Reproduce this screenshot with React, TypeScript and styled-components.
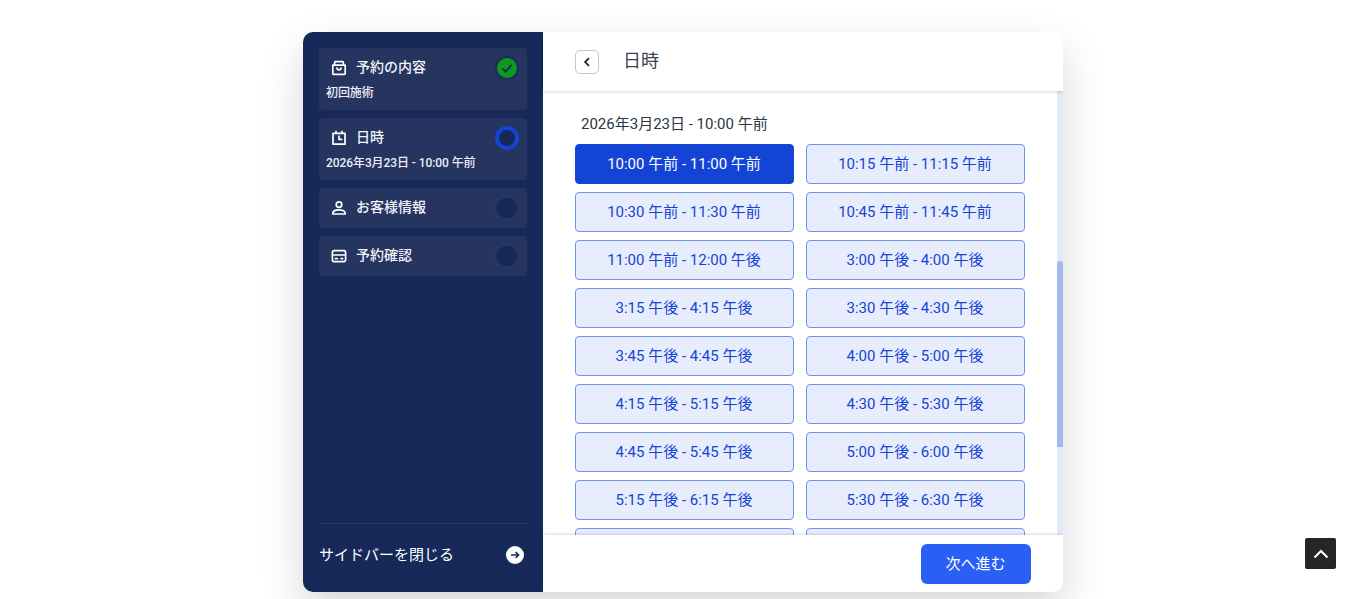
import React from "react";
import styled, { createGlobalStyle } from "styled-components";

const GlobalStyle = createGlobalStyle`
  html, body {
    margin: 0;
    height: 100%;
    background: #fff;
    overflow: hidden;
    font-family: Roboto, "Noto Sans CJK JP", sans-serif;
  }
`;

const Page = styled.div`
  display: flex;
  justify-content: center;
  padding-top: 32px;
`;

const Card = styled.div`
  display: flex;
  width: 760px;
  height: 560px;
  border-radius: 10px;
  background: #fff;
  box-shadow: 0 18px 44px rgba(0, 0, 0, 0.16);
  overflow: hidden;
`;

const Sidebar = styled.aside`
  display: flex;
  flex-direction: column;
  flex: 0 0 240px;
  box-sizing: border-box;
  padding: 16px;
  background: #172959;
`;

const Steps = styled.div`
  display: flex;
  flex-direction: column;
  gap: 8px;
  flex: 1;
`;

const Step = styled.div`
  display: flex;
  flex-direction: column;
  box-sizing: border-box;
  height: ${(p) => (p.$tall ? 62 : 40)}px;
  padding: 8px 8px 0 7px;
  border-radius: 4px;
  background: #263460;
`;

const StepRow = styled.div`
  display: flex;
  align-items: center;
  height: 24px;
`;

const StepIcon = styled.span`
  display: flex;
  width: 16px;
  height: 16px;
  margin: 0 9px 0 5px;
  color: #fff;
`;

const StepTitle = styled.span`
  flex: 1;
  padding-bottom: 5px;
  font-size: 14px;
  font-weight: 500;
  color: #f1f3f8;
`;

const StepSub = styled.div`
  margin-top: 5px;
  font-size: 12px;
  line-height: 16px;
  font-weight: 500;
  letter-spacing: -0.08px;
  color: #eceef4;
`;

const Status = styled.span`
  display: flex;
  align-items: center;
  justify-content: center;
  box-sizing: border-box;
  width: 24px;
  height: 24px;
  border-radius: 50%;
  background: ${(p) => (p.$state === "done" ? "#0c9a1e" : "#172959")};
  border: ${(p) =>
    p.$state === "active"
      ? "4px solid #1444d6"
      : p.$state === "done"
        ? "2px solid #1c2c5e"
        : "1px solid #33416f"};
  color: #172959;
`;

const SidebarFooter = styled.div`
  display: flex;
  align-items: center;
  justify-content: space-between;
  height: 53px;
  margin-bottom: -1px;
  border-top: 1px solid #2a3963;
`;

const CloseLabel = styled.span`
  padding-top: 6px;
  font-size: 15px;
  color: #fff;
`;

const CloseIcon = styled.span`
  display: flex;
  align-items: center;
  justify-content: center;
  width: 18px;
  height: 18px;
  margin: 9px 3px 0 0;
  border-radius: 50%;
  background: #fff;
  color: #172959;
`;

const Main = styled.main`
  display: flex;
  flex-direction: column;
  flex: 1;
  min-width: 0;
`;

const Header = styled.header`
  display: flex;
  align-items: center;
  flex: 0 0 59px;
  padding-left: 32px;
  position: relative;
  z-index: 1;
  box-shadow: 0 1px 3px rgba(0, 0, 0, 0.16);
`;

const BackButton = styled.button`
  display: flex;
  align-items: center;
  justify-content: center;
  box-sizing: border-box;
  width: 24px;
  height: 24px;
  padding: 0;
  margin-right: 24px;
  border: 1px solid #c4c7cc;
  border-radius: 5px;
  background: #fff;
  color: #1f2a3a;
`;

const HeaderTitle = styled.h1`
  margin: 0;
  padding-bottom: 5px;
  font-size: 18px;
  font-weight: 400;
  color: #39424e;
`;

const ScrollArea = styled.div`
  display: flex;
  flex: 1;
  min-height: 0;
`;

const Slots = styled.div`
  flex: 1;
  min-width: 0;
  overflow: hidden;
  padding: 22px 32px 0;
`;

const DateLabel = styled.div`
  margin: 0 0 8px 6px;
  font-size: 15px;
  line-height: 23px;
  color: #2b3644;
`;

const SlotGrid = styled.div`
  display: grid;
  grid-template-columns: 219px 219px;
  gap: 8px 12px;
`;

const Slot = styled.button`
  box-sizing: border-box;
  height: 40px;
  padding: 0 1px 4px 0;
  border: 1px solid ${(p) => (p.$selected ? "#1444d6" : "#6e92f2")};
  border-radius: 4px;
  background: ${(p) => (p.$selected ? "#1444d6" : "#e7edfd")};
  color: ${(p) => (p.$selected ? "#fff" : "#1444d6")};
  font-family: inherit;
  font-size: 15px;
`;

const ScrollTrack = styled.div`
  flex: 0 0 6px;
  background: #e4e9fa;
`;

const ScrollThumb = styled.div`
  height: 186px;
  margin-top: 170px;
  border-radius: 3px 3px 0 0;
  background: #a5b8ee;
`;

const Footer = styled.footer`
  display: flex;
  justify-content: flex-end;
  align-items: center;
  flex: 0 0 57px;
  box-sizing: border-box;
  padding: 1px 32px 0 0;
  position: relative;
  z-index: 1;
  background: #fff;
  box-shadow: 0 -1px 3px rgba(0, 0, 0, 0.14);
`;

const NextButton = styled.button`
  width: 110px;
  height: 40px;
  padding: 0 1px 4px 0;
  border: 0;
  border-radius: 6px;
  background: #2a5ff6;
  color: #fff;
  font-family: inherit;
  font-size: 15px;
`;

const ToTop = styled.button`
  position: fixed;
  left: 1305px;
  top: 538px;
  display: flex;
  align-items: center;
  justify-content: center;
  width: 31px;
  height: 31px;
  padding: 0;
  border: 0;
  border-radius: 2px;
  background: #262626;
  color: #fff;
`;

const iconProps = {
  width: 16,
  height: 16,
  viewBox: "0 0 16 16",
  fill: "none",
  stroke: "currentColor",
  strokeWidth: 1.7,
  strokeLinecap: "round" as const,
  strokeLinejoin: "round" as const,
};

const BagIcon = () => (
  <svg {...iconProps}>
    <path d="M3.2 5.2 4 1.6h8l.8 3.6M1.8 5.2h12.4v8.2a.9.9 0 0 1-.9.9H2.7a.9.9 0 0 1-.9-.9z" />
    <path d="M6 8c0 2.4 4 2.4 4 0" />
  </svg>
);

const CalendarIcon = () => (
  <svg {...iconProps}>
    <path d="M2 3.4h12v10.8H2zM5 1.4v2M11 1.4v2" />
    <path d="M8 6.2v3.2h2.6" />
  </svg>
);

const UserIcon = () => (
  <svg {...iconProps}>
    <circle cx="8" cy="4.6" r="2.8" />
    <path d="M1.8 14v-.8C1.8 11 4.4 9.8 8 9.8s6.2 1.2 6.2 3.4v.8z" />
  </svg>
);

const PaymentIcon = () => (
  <svg {...iconProps}>
    <rect x="1.4" y="2.6" width="13.2" height="11" rx="1.6" />
    <path d="M2 7h12M4.4 10.6h2M10 10.6h1.6" />
  </svg>
);

const CheckIcon = () => (
  <svg width="14" height="14" viewBox="0 0 14 14" fill="none" stroke="currentColor" strokeWidth="1.8">
    <path d="M2.5 7.5 5.6 10.6 11.6 3.8" />
  </svg>
);

const ArrowIcon = () => (
  <svg width="10" height="10" viewBox="0 0 10 10" fill="none" stroke="currentColor" strokeWidth="1.6">
    <path d="M1 5h7.5M5.6 2 8.6 5 5.6 8" />
  </svg>
);

const ChevronLeft = () => (
  <svg width="12" height="12" viewBox="0 0 10 10" fill="none" stroke="currentColor" strokeWidth="1.5">
    <path d="M6.6 1.8 3.4 5l3.2 3.2" />
  </svg>
);

const ChevronUp = () => (
  <svg width="16" height="16" viewBox="0 0 16 16" fill="none" stroke="currentColor" strokeWidth="2">
    <path d="M1.5 11.5 8 5l6.5 6.5" />
  </svg>
);

// the last row is only peeking out above the footer, its labels never show
const slots = [
  "10:00 午前 - 11:00 午前",
  "10:15 午前 - 11:15 午前",
  "10:30 午前 - 11:30 午前",
  "10:45 午前 - 11:45 午前",
  "11:00 午前 - 12:00 午後",
  "3:00 午後 - 4:00 午後",
  "3:15 午後 - 4:15 午後",
  "3:30 午後 - 4:30 午後",
  "3:45 午後 - 4:45 午後",
  "4:00 午後 - 5:00 午後",
  "4:15 午後 - 5:15 午後",
  "4:30 午後 - 5:30 午後",
  "4:45 午後 - 5:45 午後",
  "5:00 午後 - 6:00 午後",
  "5:15 午後 - 6:15 午後",
  "5:30 午後 - 6:30 午後",
  "",
  "",
];

export default function App() {
  return (
    <>
      <GlobalStyle />
      <Page>
        <Card>
          <Sidebar>
            <Steps>
              <Step $tall>
                <StepRow>
                  <StepIcon><BagIcon /></StepIcon>
                  <StepTitle>予約の内容</StepTitle>
                  <Status $state="done"><CheckIcon /></Status>
                </StepRow>
                <StepSub>初回施術</StepSub>
              </Step>
              <Step $tall>
                <StepRow>
                  <StepIcon><CalendarIcon /></StepIcon>
                  <StepTitle>日時</StepTitle>
                  <Status $state="active" />
                </StepRow>
                <StepSub>2026年3月23日 - 10:00 午前</StepSub>
              </Step>
              <Step>
                <StepRow>
                  <StepIcon><UserIcon /></StepIcon>
                  <StepTitle>お客様情報</StepTitle>
                  <Status />
                </StepRow>
              </Step>
              <Step>
                <StepRow>
                  <StepIcon><PaymentIcon /></StepIcon>
                  <StepTitle>予約確認</StepTitle>
                  <Status />
                </StepRow>
              </Step>
            </Steps>
            <SidebarFooter>
              <CloseLabel>サイドバーを閉じる</CloseLabel>
              <CloseIcon><ArrowIcon /></CloseIcon>
            </SidebarFooter>
          </Sidebar>
          <Main>
            <Header>
              <BackButton><ChevronLeft /></BackButton>
              <HeaderTitle>日時</HeaderTitle>
            </Header>
            <ScrollArea>
              <Slots>
                <DateLabel>2026年3月23日 - 10:00 午前</DateLabel>
                <SlotGrid>
                  {slots.map((s, i) => (
                    <Slot key={i} $selected={i === 0}>{s}</Slot>
                  ))}
                </SlotGrid>
              </Slots>
              <ScrollTrack><ScrollThumb /></ScrollTrack>
            </ScrollArea>
            <Footer>
              <NextButton>次へ進む</NextButton>
            </Footer>
          </Main>
        </Card>
      </Page>
      <ToTop><ChevronUp /></ToTop>
    </>
  );
}
